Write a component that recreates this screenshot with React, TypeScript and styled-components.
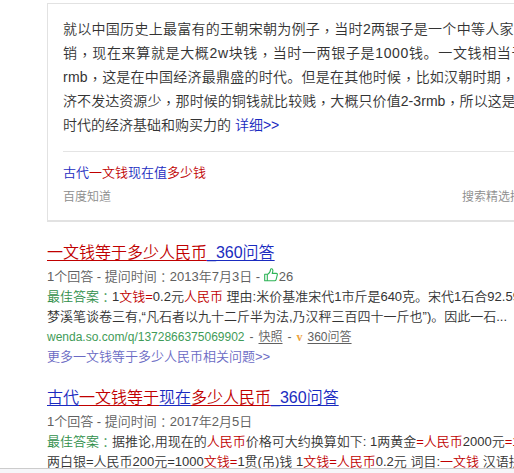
import React from 'react';
import styled, { createGlobalStyle } from 'styled-components';

const GlobalStyle = createGlobalStyle`
  body {
    margin: 0;
    background: #fff;
    overflow: hidden;
    font-family: 'Liberation Sans', 'Noto Sans CJK SC', sans-serif;
    font-weight: 350;
  }
`;

const Page = styled.div`
  position: relative;
  width: 100vw;
  height: 100vh;
  overflow: hidden;
`;

const Content = styled.main`
  width: 504px;
  padding: 3px 0 0 47px;
  white-space: nowrap;
`;

const Card = styled.section`
  box-sizing: border-box;
  height: 219px;
  padding: 13px 15px 0;
  border: 1px solid #e2e2e2;
  border-bottom: 2px solid #e2e2e2;
`;

const Excerpt = styled.div`
  padding-bottom: 14px;
  border-bottom: 1px solid #e4e4e4;
  color: #333;
`;

const ExcerptLine = styled.div<{ spacing?: number }>`
  height: 24px;
  font-size: 14px;
  line-height: 24px;
  letter-spacing: ${({ spacing = 0 }) => spacing}px;
`;

const Link = styled.a`
  color: #1a2bc0;
`;

const Em = styled.em`
  font-style: normal;
  color: #c00000;
`;

// full-width marks that sit in the middle of their cell
const Mark = styled.span<{ drop?: number }>`
  font-family: 'Noto Sans CJK TC', sans-serif;
  line-height: 0;
  vertical-align: ${({ drop = 0 }) => -drop}px;
`;

const CardTitle = styled.div`
  margin-top: 9px;
  font-size: 13px;
  line-height: 24px;
`;

const CardFooter = styled.div`
  display: flex;
  justify-content: space-between;
  font-size: 12px;
  line-height: 25px;
  color: #8c8c8c;

  span:last-child {
    margin-right: 1px;
  }
`;

const Result = styled.article`
  margin-top: 18px;
  font-size: 13px;
  line-height: 20px;
  color: #333;
`;

const ResultTitle = styled.h3`
  height: 27px;
  margin: 0;
  font-size: 16px;
  font-weight: inherit;
  line-height: 26px;

  a, em {
    text-decoration: underline;
    text-underline-offset: 2px;
    text-decoration-thickness: 1px;
    text-decoration-skip-ink: none;
  }
`;

const Row = styled.div`
  height: 20px;
`;

const Meta = styled(Row)`
  display: flex;
  color: #606060;
  white-space: pre;
`;

const Label = styled.span`
  color: #2f8f4a;
`;

const Source = styled(Row)`
  display: flex;
  font-size: 12px;
  line-height: 20px;
  color: #606060;
  white-space: pre;

  u {
    text-underline-offset: 2px;
  }
`;

const Dash = styled.span`
  margin: 0 5px;
`;

const Site = styled.span`
  color: #3f9b58;
`;

const Badge = styled.span`
  width: 11px;
  font: bold 12px/20px 'Liberation Serif', serif;
  color: #eda23b;
`;

const More = styled(Row)`
  color: #6a6ac4;
`;

const BottomBar = styled.div`
  position: absolute;
  left: 0;
  right: 0;
  bottom: 0;
  height: 4px;
  border-top: 1px solid #ccc;
  background: #f6f6f9;
`;

const ThumbIcon = styled.svg`
  width: 14px;
  height: 14px;
  margin: 1px 1px 0 0;
  fill: none;
  stroke: #2fb457;
  stroke-width: 1.1;
  stroke-linejoin: round;
`;

const Thumb = () => (
  <ThumbIcon viewBox="0 0 14 14">
    <path d="M.7 6.2h2.6v6.6H.7zM3.3 6.6C5.5 5.3 6.4 4 6.6 1.5c.1-1 2-1 2.2.4.2 1.2-.1 2.3-.6 3.5h4c1.1 0 1.3.7 1.1 1.5l-1.2 4.7c-.2.9-.6 1.2-1.4 1.2H3.3" />
  </ThumbIcon>
);

const Comma = () => <Mark drop={2}>，</Mark>;
const Colon = () => <Mark drop={1}>：</Mark>;

const App = () => (
  <Page>
    <GlobalStyle />
    <Content>
      <Card>
        <Excerpt>
          <ExcerptLine spacing={0.28}>
            就以中国历史上最富有的王朝宋朝为例子<Comma />当时2两银子是一个中等人家
          </ExcerptLine>
          <ExcerptLine spacing={0.65}>
            销<Comma />现在来算就是大概2w块钱<Comma />当时一两银子是1000钱。一文钱相当于
          </ExcerptLine>
          <ExcerptLine spacing={0.25}>
            rmb<Comma />这是在中国经济最鼎盛的时代。但是在其他时候<Comma />比如汉朝时期<Comma />
          </ExcerptLine>
          <ExcerptLine spacing={0.07}>
            济不发达资源少<Comma />那时候的铜钱就比较贱<Comma />大概只价值2-3rmb<Comma />所以这是
          </ExcerptLine>
          <ExcerptLine>
            时代的经济基础和购买力的 <Link>详细&gt;&gt;</Link>
          </ExcerptLine>
        </Excerpt>
        <CardTitle>
          <Link>古代<Em>一文钱</Em>现在值<Em>多少钱</Em></Link>
        </CardTitle>
        <CardFooter>
          <span>百度知道</span>
          <span>搜索精选摘要</span>
        </CardFooter>
      </Card>

      <Result>
        <ResultTitle>
          <Link><Em>一文钱等于多少人民币</Em>_360问答</Link>
        </ResultTitle>
        <Meta>
          <span>1个回答 - 提问时间<Colon />2013年7月3日 - </span>
          <Thumb />
          <span>26</span>
        </Meta>
        <Row>
          <Label>最佳答案<Colon /></Label>1<Em>文钱=</Em>0.2元<Em>人民币</Em> 理由:米价基准宋代1市斤是640克。宋代1石合92.59
        </Row>
        <Row>梦溪笔谈卷三有,“凡石者以九十二斤半为法,乃汉秤三百四十一斤也”)。因此一石...</Row>
        <Source>
          <Site>wenda.so.com/q/1372866375069902</Site>
          <Dash>-</Dash>
          <u>快照</u>
          <Dash>-</Dash>
          <Badge>v</Badge>
          <u>360问答</u>
        </Source>
        <More>更多一文钱等于多少人民币相关问题&gt;&gt;</More>
      </Result>

      <Result>
        <ResultTitle>
          <Link>古代<Em>一文钱等于</Em>现在<Em>多少人民币</Em>_360问答</Link>
        </ResultTitle>
        <Meta>
          <span>1个回答 - 提问时间<Colon />2017年2月5日</span>
        </Meta>
        <Row>
          <Label>最佳答案<Colon /></Label>据推论,用现在的<Em>人民币</Em>价格可大约换算如下: 1两黄金<Em>=人民币</Em>2000元<Em>=1</Em>
        </Row>
        <Row>
          两白银=人民币200元=1000<Em>文钱=</Em>1贯(吊)钱 1<Em>文钱=人民币</Em>0.2元 词目:<Em>一文钱</Em> 汉语拼
        </Row>
      </Result>
    </Content>
    <BottomBar />
  </Page>
);

export default App;
